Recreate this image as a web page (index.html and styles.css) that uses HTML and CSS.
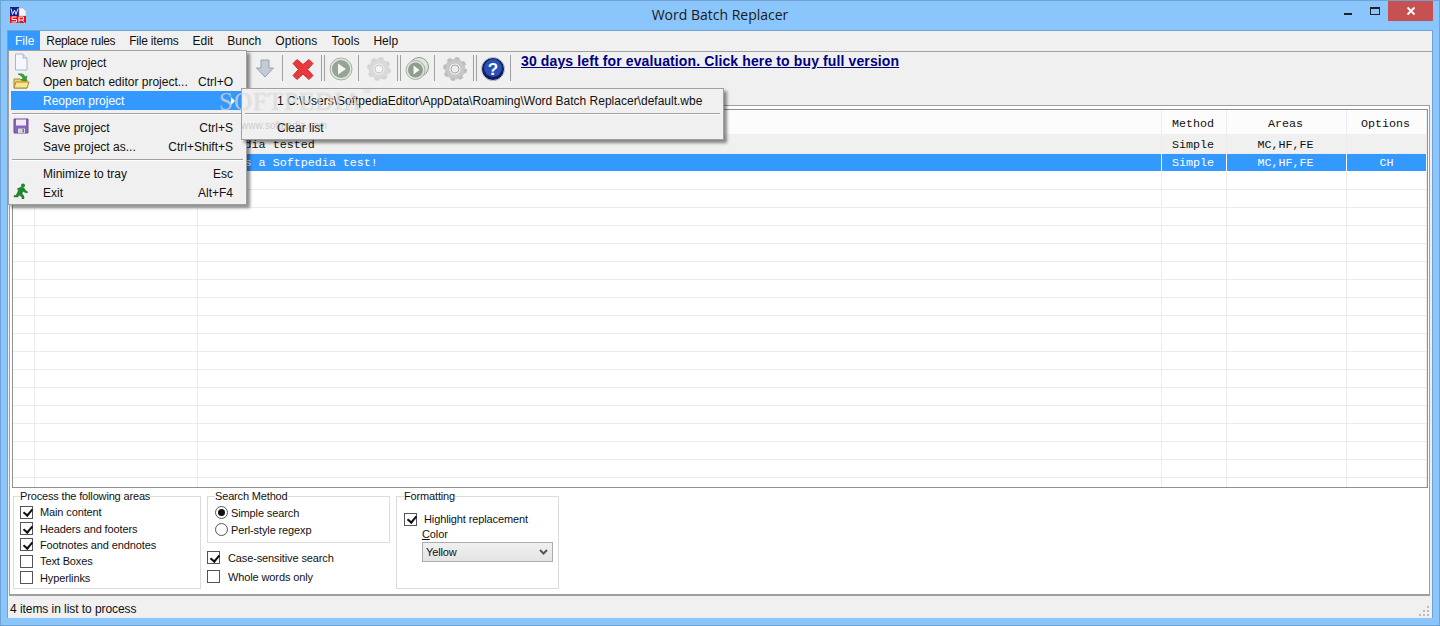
FILE: index.html
```html
<!DOCTYPE html>
<html lang="en">
<head>
<meta charset="utf-8">
<title>Word Batch Replacer</title>
<link rel="stylesheet" href="styles.css">
</head>
<body>
<div class="window">
  <header class="titlebar">
    <svg class="applogo" width="16" height="16" viewBox="0 0 16 16"><rect x="0" y="0" width="9" height="9" fill="#12208c"/><path d="M9 1h4l3 3v5H9z" fill="#f6f6f6" stroke="#99a" stroke-width=".5"/><path d="M1 1.500l1.500 6 2-4.500 1.500 4.500L8 1.500" fill="none" stroke="#e8e8f4" stroke-width="1"/><rect x="0" y="9" width="16" height="7" fill="#f00a14"/><path d="M6.500 10H2v2.500h4.500V15H1.500M9 15.500V10h4.500v3H9m3 0l2.500 2.500" fill="none" stroke="#fff" stroke-width="1"/></svg>
    <div class="title">Word Batch Replacer</div>
    <div class="winbtns">
      <span class="wb"><i class="min"></i></span>
      <span class="wb"><i class="max"></i></span>
      <span class="wb close"><svg width="10" height="10" viewBox="0 0 10 10"><path d="M1.500 1.500l7 7M8.500 1.500l-7 7" stroke="#fff" stroke-width="1.800"/></svg></span>
    </div>
  </header>
  <div class="client">
    <nav class="menubar">
      <span class="mi active">File</span><span class="mi rr">Replace rules</span><span class="mi fi">File items</span><span class="mi">Edit</span><span class="mi">Bunch</span><span class="mi op">Options</span><span class="mi">Tools</span><span class="mi">Help</span>
    </nav>
    <div class="toolbar">
      <svg class="tb-down" width="22" height="22" viewBox="0 0 22 22"><path d="M7 3h8v8h4.500L11 20 2.500 11H7z" fill="#c3cbd6" stroke="#98a2ae"/></svg>
      <span class="sep"></span>
      <svg class="tb a" width="24" height="24" viewBox="0 0 24 24"><path d="M6 2.500l6 5 6-5 4 4-5.500 6 5.500 6-4 4-6-5.500-6 5.500-4-4 5.500-6L2 6.500z" fill="#e8393c" stroke="#c83034" stroke-linejoin="round"/></svg>
      <span class="sep dbl"></span>
      <svg class="tb b" width="24" height="24" viewBox="0 0 24 24"><circle cx="12" cy="12" r="11" fill="#dfe4df" stroke="#a8b0a8"/><circle cx="12" cy="12" r="9" fill="#95a595"/><path d="M9 6.500l8 5.500-8 5.500z" fill="#f4f6f2"/></svg>
      <span class="sep"></span>
      <svg class="tb a" width="24" height="24" viewBox="0 0 24 24"><circle cx="12" cy="12" r="8" fill="none" stroke="#dadada" stroke-width="5"/><circle cx="12" cy="12" r="10.500" fill="none" stroke="#d4d4d4" stroke-width="3" stroke-dasharray="4.100 4.146"/><circle cx="12" cy="12" r="4" fill="#f6f6f6" stroke="#c4c4c4"/></svg>
      <span class="sep dbl"></span>
      <svg class="tb b" width="24" height="24" viewBox="0 0 24 24"><circle cx="14" cy="10" r="9.500" fill="#dfe4df" stroke="#8f998f"/><circle cx="10.500" cy="13" r="9.500" fill="#dfe4df" stroke="#a8b0a8"/><circle cx="10.500" cy="13" r="7.500" fill="#8d9e8d"/><path d="M8.500 8.500l6 4.500-6 4.500z" fill="#f4f6f2"/></svg>
      <span class="sep"></span>
      <svg class="tb a" width="24" height="24" viewBox="0 0 24 24"><circle cx="12" cy="12" r="8" fill="none" stroke="#c8c8c8" stroke-width="5"/><circle cx="12" cy="12" r="10.500" fill="none" stroke="#bdbdbd" stroke-width="3" stroke-dasharray="4.100 4.146"/><circle cx="12" cy="12" r="4" fill="#eee" stroke="#aaa"/></svg>
      <span class="sep dbl"></span>
      <svg class="tb b" width="24" height="24" viewBox="0 0 24 24"><circle cx="12" cy="12" r="11.500" fill="#101c5c" stroke="#c4c8d0"/><circle cx="12" cy="11" r="9" fill="#2a50b8"/><text class="qm" x="12" y="18" text-anchor="middle">?</text></svg>
      <span class="sep"></span>
      <a class="buy">30 days left for evaluation. Click here to buy full version</a>
    </div>
    <div class="frame">
      <div class="gridbox">
        <table class="grid">
          <colgroup><col class="c1"><col class="c2"><col><col class="c4"><col class="c5"><col class="c6"></colgroup>
          <thead><tr><th></th><th></th><th></th><th class="nudge">Method</th><th class="nudge">Areas</th><th class="nudge">Options</th></tr></thead>
          <tbody>
            <tr class="alt"><td></td><td></td><td class="l">Softpedia tested</td><td class="nudge">Simple</td><td class="nudge">MC,HF,FE</td><td></td></tr>
            <tr class="sel"><td></td><td></td><td class="l">This is a Softpedia test!</td><td class="nudge">Simple</td><td class="nudge">MC,HF,FE</td><td>CH</td></tr>
            <tr><td></td><td></td><td></td><td></td><td></td><td></td></tr>
            <tr><td></td><td></td><td></td><td></td><td></td><td></td></tr>
            <tr><td></td><td></td><td></td><td></td><td></td><td></td></tr>
            <tr><td></td><td></td><td></td><td></td><td></td><td></td></tr>
            <tr><td></td><td></td><td></td><td></td><td></td><td></td></tr>
            <tr><td></td><td></td><td></td><td></td><td></td><td></td></tr>
            <tr><td></td><td></td><td></td><td></td><td></td><td></td></tr>
            <tr><td></td><td></td><td></td><td></td><td></td><td></td></tr>
            <tr><td></td><td></td><td></td><td></td><td></td><td></td></tr>
            <tr><td></td><td></td><td></td><td></td><td></td><td></td></tr>
            <tr><td></td><td></td><td></td><td></td><td></td><td></td></tr>
            <tr><td></td><td></td><td></td><td></td><td></td><td></td></tr>
            <tr><td></td><td></td><td></td><td></td><td></td><td></td></tr>
            <tr><td></td><td></td><td></td><td></td><td></td><td></td></tr>
            <tr><td></td><td></td><td></td><td></td><td></td><td></td></tr>
            <tr><td></td><td></td><td></td><td></td><td></td><td></td></tr>
            <tr><td></td><td></td><td></td><td></td><td></td><td></td></tr>
            <tr><td></td><td></td><td></td><td></td><td></td><td></td></tr>
          </tbody>
        </table>
      </div>
      <div class="options">
        <fieldset class="group g1">
          <legend>Process the following areas</legend>
          <label class="chk"><i class="box on"></i>Main content</label>
          <label class="chk"><i class="box on"></i>Headers and footers</label>
          <label class="chk"><i class="box on"></i>Footnotes and endnotes</label>
          <label class="chk"><i class="box"></i>Text Boxes</label>
          <label class="chk"><i class="box"></i>Hyperlinks</label>
        </fieldset>
        <div class="col2">
          <fieldset class="group g2">
            <legend>Search Method</legend>
            <label class="rad"><i class="dot on"></i>Simple search</label>
            <label class="rad"><i class="dot"></i>Perl-style regexp</label>
          </fieldset>
          <label class="chk chk2"><i class="box on"></i>Case-sensitive search</label>
          <label class="chk chk2"><i class="box"></i>Whole words only</label>
        </div>
        <fieldset class="group g3">
          <legend>Formatting</legend>
          <label class="chk chk3"><i class="box on"></i>Highlight replacement</label>
          <div class="colorlbl"><u>C</u>olor</div>
          <div class="select"><span>Yellow</span><svg width="9" height="7" viewBox="0 0 9 7"><path d="M1 1l3.500 3.500L8 1" fill="none" stroke="#555" stroke-width="2"/></svg></div>
        </fieldset>
      </div>
    </div>
    <footer class="status">
      <span>4 items in list to process</span>
      <svg class="grip" width="10" height="10" viewBox="0 0 10 10"><path d="M8 0h2v2H8zM4 4h2v2H4zM8 4h2v2H8zM0 8h2v2H0zM4 8h2v2H4zM8 8h2v2H8z" fill="#bbb"/></svg>
    </footer>
  </div>

  <div class="menu filemenu">
    <div class="row"><svg class="mico" width="16" height="18" viewBox="0 0 16 18"><path d="M2.500 1h7.500l4 4v12H2.500z" fill="#f4f7fd" stroke="#a8b4d0"/><path d="M10 1v4h4" fill="#dfe6f4" stroke="#a8b4d0"/></svg><span class="lbl">New project</span></div>
    <div class="row"><svg class="mico" width="17" height="18" viewBox="0 0 17 18"><path d="M1 7h6l1 1h6v8H1z" fill="#f4d060" stroke="#a88a30"/><path d="M1 16l2-6h13l-2 6z" fill="#fbe694" stroke="#a88a30"/><path d="M5 2c4-1 6 0 7 3l2-1-1 5-5-1 2-1.500C9 4.500 8 3.500 5 2z" fill="#2fa52f" stroke="#197a19" stroke-width=".5"/></svg><span class="lbl">Open batch editor project...</span><span class="key">Ctrl+O</span></div>
    <div class="row hl"><span class="lbl">Reopen project</span><i class="arrow"></i></div>
    <hr class="mhr">
    <div class="row"><svg class="mico" width="16" height="16" viewBox="0 0 16 16"><path d="M1 1h14v14H1z" fill="#8a64b8" stroke="#6c4c98"/><rect x="3" y="1.500" width="10" height="6" fill="#efeaf5"/><rect x="5" y="10.500" width="7" height="4.500" fill="#d8d8d8"/><rect x="9.500" y="11" width="1.500" height="3.500" fill="#777"/></svg><span class="lbl">Save project</span><span class="key">Ctrl+S</span></div>
    <div class="row"><span class="lbl">Save project as...</span><span class="key">Ctrl+Shift+S</span></div>
    <hr class="mhr">
    <div class="row"><span class="lbl">Minimize to tray</span><span class="key">Esc</span></div>
    <div class="row"><svg class="mico" width="16" height="16" viewBox="0 0 16 16"><circle cx="10" cy="2.500" r="2" fill="#1c8a2c"/><path d="M4 6l4-2 3 1 2 3 2 1-1 1-3-1-1-1-1 3 2 2v3h-2v-2l-3-2-1 2H1v-1.500h2l2-4 .5-3-1 1z" fill="#1c8a2c" stroke="#0d5a18" stroke-width=".4"/></svg><span class="lbl">Exit</span><span class="key">Alt+F4</span></div>
  </div>

  <div class="menu submenu">
    <div class="row"><span>1 C:\Users\SoftpediaEditor\AppData\Roaming\Word Batch Replacer\default.wbe</span></div>
    <hr class="mhr">
    <div class="row"><span>Clear list</span></div>
  </div>

  <div class="wm">SOFTPEDIA<span class="tm">™</span></div>
  <div class="wm2">www.softpedia.com</div>
</div>
</body>
</html>
```
FILE: styles.css
```css
* { box-sizing: border-box; }
html, body { margin: 0; padding: 0; }
body { width: 1440px; height: 626px; overflow: hidden; font-family: "Liberation Sans", Arial, sans-serif; font-size: 12px; color: #111; }
.window { position: relative; width: 1440px; height: 626px; display: flex; flex-direction: column; padding: 0 6px 7px; background: #8ac6fc; border: 1px solid #6fa3d4; }
.titlebar { height: 29px; margin: 0 -6px; padding: 6px 0 0 9px; display: flex; align-items: flex-start; flex: none; position: relative; }
.title { position: absolute; left: 0; right: 0; top: 4px; text-align: center; font-size: 14px; color: #1a1a1a; font-family: "Open Sans", sans-serif; }
.winbtns { position: absolute; right: 6px; top: 0; display: flex; }
.wb { width: 27px; height: 20px; display: flex; align-items: center; justify-content: center; }
.wb.close { width: 45px; background: #c75050; }
.wb .min { width: 8px; height: 2px; background: #222; margin-top: 6px; }
.wb .max { width: 10px; height: 8px; border: 1px solid #222; border-top-width: 2px; }
.client { flex: 1; display: flex; flex-direction: column; background: #f0f0f0; border: 1px solid #6fa3d4; border-bottom: 0; min-height: 0; }
.menubar { height: 21px; flex: none; display: flex; border-bottom: 1px solid #a0a0a0; }
.mi { height: 20px; line-height: 20px; padding: 0 7px; }
.mi.active { background: #3399ff; color: #fff; padding-right: 6px; }
.mi.rr { padding-left: 6px; letter-spacing: -.35px; }
.mi.fi { letter-spacing: -.2px; }
.mi.op { letter-spacing: .12px; }
.toolbar { height: 53px; flex: none; display: flex; align-items: flex-start; padding: 3px 0 0 246px; background: #f0f0f0; }
.tb-down { flex: none; margin: 2px 6px 0 0; }
.tb { flex: none; margin-top: 2px; }
.tb.a { margin-left: 8px; margin-right: 6px; }
.tb.b { margin-left: 4px; margin-right: 5px; }
.sep { width: 1px; height: 26px; background: #a0a0a0; flex: none; }
.sep.dbl { width: 4px; background: none; border-left: 1px solid #a0a0a0; border-right: 1px solid #a0a0a0; }
.buy { margin-left: 10px; font-weight: bold; font-size: 14px; letter-spacing: .12px; color: #000080; text-decoration: underline; line-height: 16px; white-space: nowrap; margin-top: -2px; }
.frame { flex: 1; margin: 0 2px 0 1px; background: #fff; border: 1px solid #a0a0a0; border-bottom-width: 2px; display: flex; flex-direction: column; min-height: 0; padding: 3px 1px 0 2px; }
.gridbox { height: 379px; flex: none; overflow: hidden; border: 1px solid #909090; }
.grid { width: 100%; table-layout: fixed; border-collapse: collapse; font-family: "Liberation Mono", monospace; font-size: 11.700px; color: #111; }
.c1 { width: 21px; } .c2 { width: 163px; } .c4 { width: 65px; } .c5 { width: 120px; } .c6 { width: 80px; }
.grid th { height: 24px; font-weight: normal; background: #fcfcfc; border-right: 1px solid #e6eefa; padding: 3px 0 0; }
.grid td { height: 18px; padding: 1px 0 0; text-align: center; border-right: 1px solid #ececec; border-bottom: 1px solid #ececec; white-space: nowrap; line-height: 16px; }
.grid th.nudge, .grid td.nudge { padding-right: 2px; }
.grid td.l { text-align: left; padding-left: 5px; }
.grid .alt td { background: #f0f0f0; height: 19px; padding-top: 3px; }
.grid .sel td { background: #3399ff; color: #fff; border-color: #fff; }
.options { flex: 1; display: flex; padding: 1px 0 0; min-height: 0; align-items: flex-start; font-size: 11px; letter-spacing: -.12px; }
.group { border: 1px solid #dcdcdc; margin: 0; padding: 0; min-width: 0; position: relative; }
.group legend { padding: 0; line-height: 14px; font-size: 11px; letter-spacing: -.16px; }
.g1 { width: 188px; height: 100px; padding: 1px 0 0 6px; margin-left: 1px; }
.g1 .box { margin-right: 7px; }
.col2 { width: 183px; margin-left: 6px; }
.g2 { height: 54px; padding: 1px 0 0 7px; }
.g3 { width: 163px; height: 100px; margin-left: 6px; padding: 8px 0 0 7px; }
.chk { display: flex; align-items: center; height: 16.400px; line-height: 16px; }
.box { width: 13px; height: 13px; border: 1px solid #555; background: #fff; margin-right: 8px; flex: none; position: relative; }
.box.on::after { content: ""; position: absolute; left: 3.500px; top: .5px; width: 4px; height: 7px; border: solid #111; border-width: 0 2px 2px 0; transform: rotate(40deg); }
.rad { display: flex; align-items: center; height: 17px; }
.dot { width: 13px; height: 13px; border-radius: 50%; border: 1px solid #555; background: #fff; margin-right: 3px; flex: none; position: relative; }
.dot.on::after { content: ""; position: absolute; left: 2px; top: 2px; width: 7px; height: 7px; border-radius: 50%; background: #111; }
.chk2 { height: 19px; }
.col2 .g2 + .chk2 { margin-top: 5px; }
.chk3 { height: 16px; }
.g3 .box { margin-right: 7px; }
.colorlbl { margin-left: 18px; line-height: 14px; }
.select { margin: 1px 0 0 18px; width: 131px; height: 20px; border: 1px solid #acacac; background: linear-gradient(#f0f0f0, #e4e4e4); display: flex; align-items: center; justify-content: space-between; padding: 0 4px 0 3px; }
.status { height: 22px; flex: none; padding: 3px 3px 0 2px; display: flex; align-items: center; justify-content: space-between; letter-spacing: -.06px; }
.grip { align-self: flex-end; margin-bottom: 2px; }
.menu { position: absolute; background: #f0f0f0; border: 1px solid #a0a0a0; box-shadow: 3px 3px 3px rgba(0,0,0,.45); z-index: 5; }
.filemenu { left: 7px; top: 49px; width: 239px; padding: 2px; }
.menu .row { height: 19px; display: flex; align-items: center; position: relative; padding-left: 32px; padding-right: 11px; white-space: nowrap; justify-content: space-between; }
.mico { position: absolute; left: 2px; top: 0; }
.row.hl { background: #3399ff; color: #fff; }
.arrow { width: 0; height: 0; border-left: 4px solid #fff; border-top: 4px solid transparent; border-bottom: 4px solid transparent; margin-right: -2px; }
.mhr { border: 0; border-top: 1px solid #a0a0a0; border-bottom: 1px solid #fff; margin: 3px 1px; height: 2px; }
.submenu { left: 240px; top: 87px; width: 483px; padding: 2px; }
.submenu .row { padding-left: 33px; }
.wm { position: absolute; left: 218px; top: 87px; z-index: 6; font-family: "Liberation Serif", serif; font-size: 25px; letter-spacing: 1px; color: rgba(255,255,255,.55); text-shadow: 0 0 1px rgba(120,120,120,.45); white-space: nowrap; }
.tm { font-size: 8px; vertical-align: top; }
.wm2 { position: absolute; left: 240px; top: 119px; z-index: 6; font-size: 10px; color: rgba(150,150,150,.45); white-space: nowrap; }
.qm { font: bold 17px "Liberation Sans", sans-serif; fill: #fff; }
```
